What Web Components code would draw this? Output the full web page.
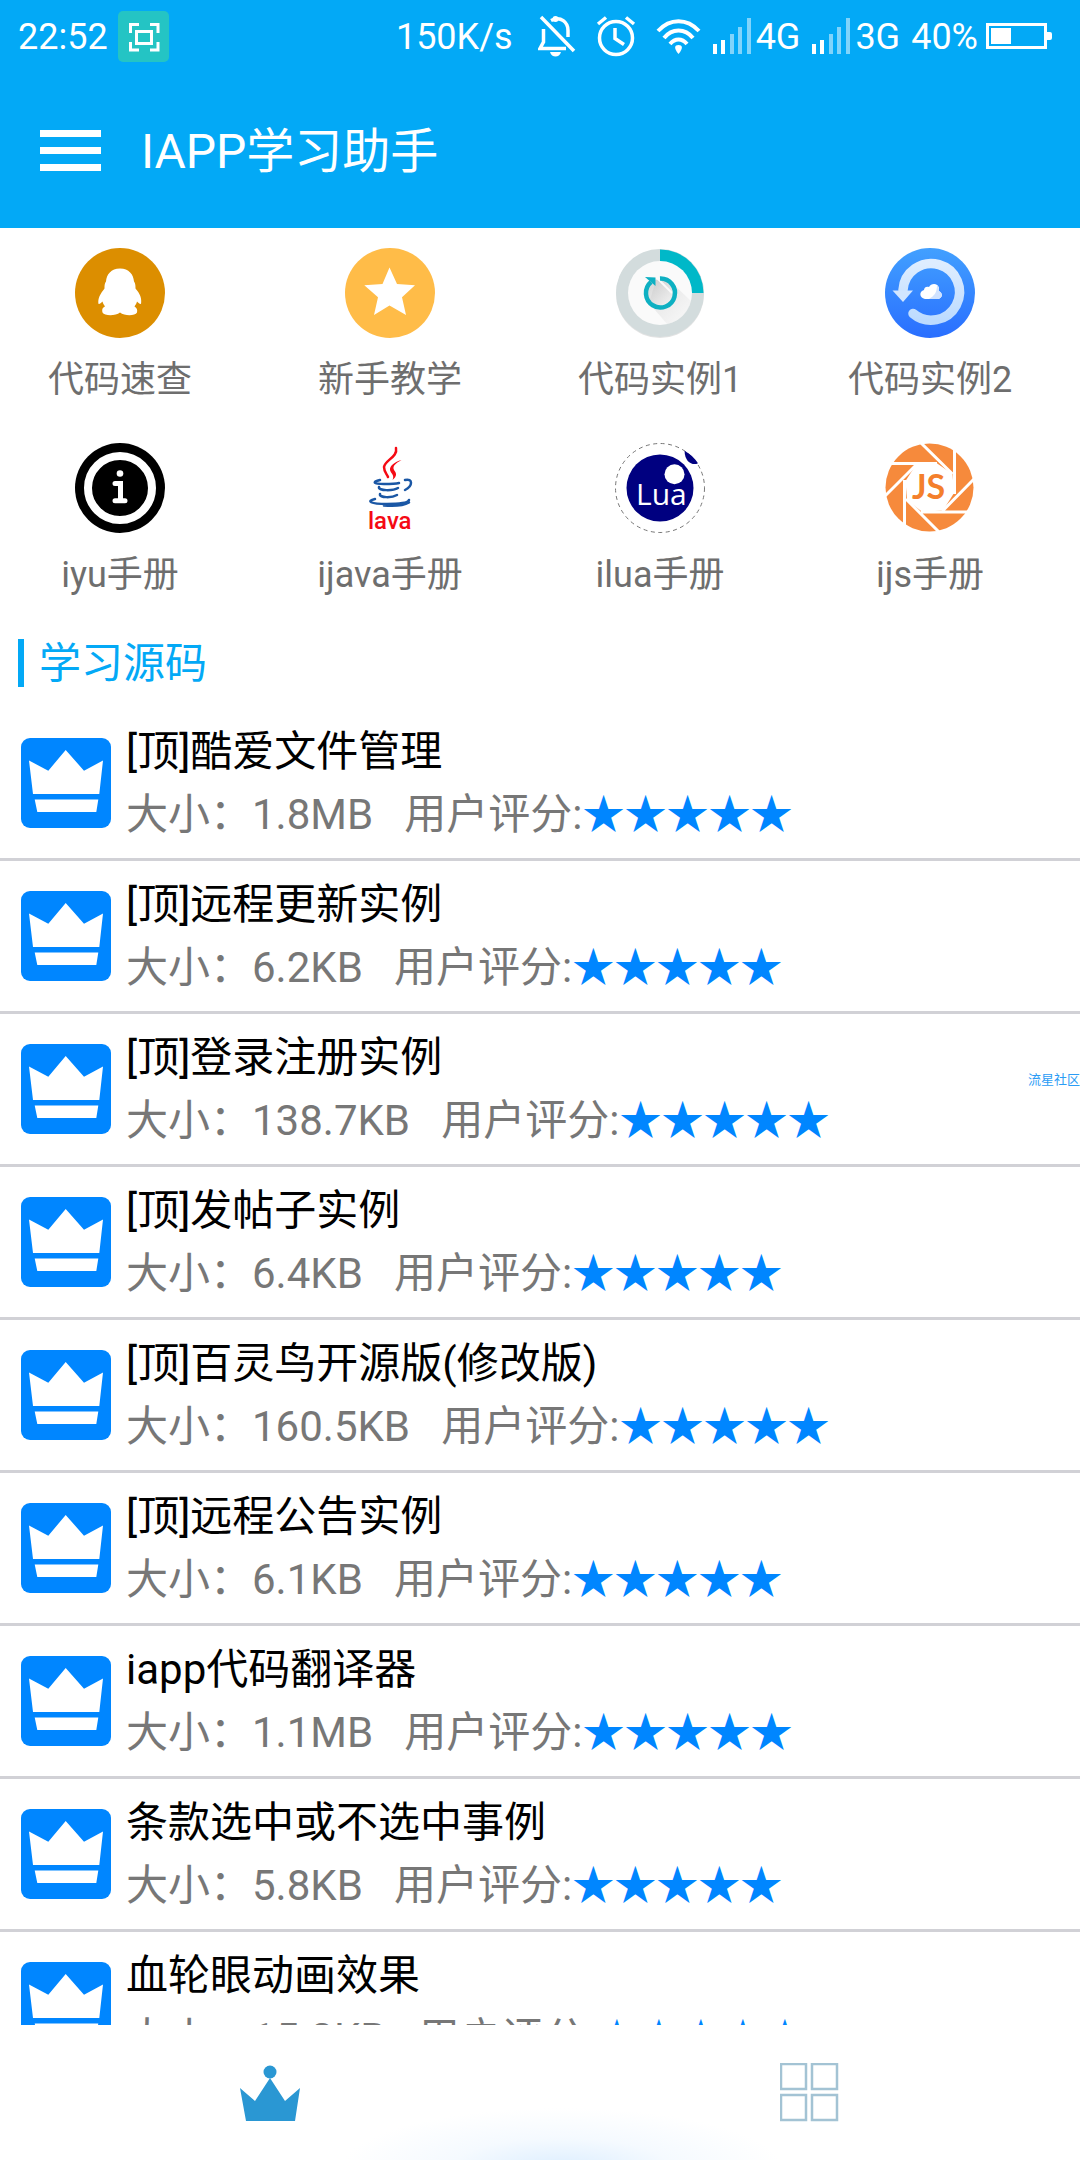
<!DOCTYPE html>
<html lang="zh-CN">
<head>
<meta charset="utf-8">
<meta name="viewport" content="width=device-width, initial-scale=1">
<title>IAPP学习助手</title>
<style>
    :root {
        --primary-color: #03a9f6;
        --accent-color: #0086ff;
        --label-color: #6e6e6e;
        --line-color: #d1d1d6;
    }
    body {
        margin: 0;
        background: #fff;
        font-family: Roboto, "Noto Sans CJK SC", sans-serif;
    }
</style>
</head>
<body>
<study-app></study-app>

<script>
const menuIcons = {
    penguin: `
        <circle cx="45" cy="45" r="45" fill="#dc8e00"/>
        <path fill="#fff" d="M45 20.5c-9 0-13.500 6-14 13-1.500 2-1.500 4-1.500 7-4 5-7 10-6 15.500 2-.2 3-1.500 4-2.500 .5 2 1.500 3.500 2.500 5-3 1.500-3 3-2.500 6 2 3.500 13 3.500 17.500 0 4.500 3.500 15 3.500 17 0 .5-3 0-4.500-2.500-6 1-1.500 2-3 2.500-5 1 1 2 2.300 4 2.500 1-5.500-1-10.500-5.500-15.500 0-3 0-5-1.500-7-.5-7-5-13-14-13z"/>`,
    star: `
        <circle cx="45" cy="45" r="45" fill="#ffbc48"/>
        <path fill="#fff" d="M44.500 19.500 52 36l18 1.300-13 12L61 67l-16.500-9.500L29 67l4-17.700-13.700-12L37.500 36z"/>`,
    timer: `
        <defs><linearGradient id="shade" x1="0" y1="0" x2="1" y2="1"><stop offset="0" stop-color="#b8b8b8"/><stop offset="1" stop-color="#fafafa"/></linearGradient></defs>
        <circle cx="45" cy="46" r="44" fill="#e3e3e3"/>
        <circle cx="45" cy="45" r="44" fill="#d3dcdd"/>
        <path fill="#00b8c8" d="M45 1.500A43.500 43.500 0 0 1 88.500 45H45z"/>
        <circle cx="45" cy="45" r="32" fill="#fafafa"/>
        <path fill="url(#shade)" opacity=".4" d="M41 32 34 55l18 21c12-2 22-12 24-23L56 34z"/>
        <circle cx="45" cy="45" r="14" fill="url(#shade)" opacity=".6"/>
        <path fill="none" stroke="#fafafa" stroke-width="2" d="m42 30 15 15"/>
        <path fill="none" stroke="#0eb0c2" stroke-width="4.500" d="M45 30.500A14.500 14.500 0 1 1 36 34"/>
        <path fill="#0eb0c2" d="m30 29 10.500.5V38z"/>`,
    backup: `
        <defs>
            <linearGradient id="sky" x1="0" y1="0" x2="0" y2="1"><stop offset="0" stop-color="#42a0ff"/><stop offset="1" stop-color="#296eff"/></linearGradient>
            <linearGradient id="ring" x1="0" y1="0" x2="0" y2="1"><stop offset="0" stop-color="#deedff"/><stop offset="1" stop-color="#bcdbff"/></linearGradient>
        </defs>
        <circle cx="45" cy="45" r="45" fill="url(#sky)"/>
        <path fill="none" stroke="url(#ring)" stroke-width="9.500" stroke-linecap="round" d="M18 42A28.300 28.300 0 1 1 28 65.500"/>
        <path fill="#d2e6ff" d="M7.500 42.500H28L18 54z"/>
        <path fill="#fff" d="M40 51c-6-1-6-8-1-9 0-3 3-4 5-3 2-4 9-4 10 1 0 2 0 3 0 3 4 2 4 7-1 8z"/>
        <path fill="#cfe2ff" d="M44 51c5-3 8-6 8-14 2 2 2 4 2 6 4 2 4 7-1 8z"/>`,
    info: `
        <circle cx="45" cy="45" r="45"/>
        <circle cx="45" cy="45" r="32" fill="none" stroke="#fff" stroke-width="8"/>
        <circle cx="45" cy="30.500" r="3.300" fill="#fff"/>
        <path fill="none" stroke="#fff" stroke-width="5" stroke-linecap="round" d="M40 40.500h5.500V57M40 57.700h10"/>`,
    coffee: `
        <path fill="none" stroke="#f50a14" stroke-width="2.500" stroke-linecap="round" d="M51 5c2 9-11 12-12 19 0 5 3 7 4 10"/>
        <path fill="#f50a14" d="M56.500 17c-7 2-12 6-11.500 10 .5 3 5 5 2.500 10 5-4 4-7 1.500-10-2-4 2-7 7.500-10z"/>
        <g fill="none" stroke="#1a57a5" stroke-width="2.500" stroke-linecap="round">
            <path d="M35 37c-8 2-7 4 4 4 7 0 11 0 15-1M60 37c8-2 8 6 0 10M34 44c-1 4 14 4 19 1M35 51c-1 4 12 4 17 1M30 56c-9 2-5 5 12 5 12 0 21-1 22-4M39 62.500c10 .8 19 .5 25-3"/>
        </g>
        <text x="23" y="86" font-family="Roboto, sans-serif" font-size="24" font-weight="500" fill="#f50a14">lava</text>`,
    lua: `
        <circle cx="45" cy="45" r="44.500" fill="none" stroke="#777" stroke-dasharray="4 3.500"/>
        <circle cx="45" cy="45" r="33.500" fill="#000080"/>
        <circle cx="59.500" cy="31.300" r="10" fill="#fff"/>
        <path fill="#000080" d="M69.600 7.700c5 3 10 7 13.400 12.500-5 2.800-13.400-.7-13.400-12.500z"/>
        <text x="21" y="62" font-family="'Open Sans', sans-serif" font-size="30" fill="#fff">Lua</text>`,
    js: `
        <circle cx="44.500" cy="44.500" r="44" fill="#f68a3c"/>
        <path fill="#fff" d="M31.500 21 51.500 20l16 11L69 50 58 67.500l-21 1.200L22 57l-1.500-19z"/>
        <path fill="none" stroke="#fff" stroke-width="3" d="m36 0 31.500 31M69.500 6v45M89 36 57.500 68M84 69H36M54 89 21 56M19.500 82V37M0 53l32-32M6 20.500h46"/>
        <text x="27" y="56" font-family="Lato, sans-serif" font-size="34" font-weight="700" fill="#f47f2c">JS</text>`
};

class StatusBar extends HTMLElement {
    constructor() {
        super();
        this.attachShadow({ mode: 'open' });
    }

    connectedCallback() {
        this.shadowRoot.innerHTML = `
            <style>
                :host {
                    display: flex;
                    justify-content: space-between;
                    align-items: center;
                    height: 72px;
                    padding: 0 28px 0 18px;
                    font-size: 36px;
                    line-height: 40px;
                    color: #fff;
                }
                div { display: flex; align-items: center; }
                svg { display: block; }
                span { padding-top: 2px; }
                .left { gap: 10px; }
                .right { gap: 11px; }
                .icons { gap: 20px; margin-left: 14px; }
                .net { gap: 4px; }
                .power { gap: 8px; }
            </style>
            <div class="left">
                <span>22:52</span>
                <svg width="51" height="51" viewBox="0 0 51 51">
                    <rect width="51" height="51" rx="5" fill="#24c4c4"/>
                    <path fill="none" stroke="#fff" stroke-width="3" d="M12.500 22v-8.500H21M32 13.500h8V22M40 31v8h-8M21 39h-8.500v-8"/>
                    <rect x="18.500" y="20.500" width="15" height="12" fill="none" stroke="#fff" stroke-width="3"/>
                </svg>
            </div>
            <div class="right">
                <span>150K/s</span>
                <div class="icons">
                    <svg width="38" height="42" viewBox="0 0 38 42" fill="none" stroke="#fff" stroke-width="3.500">
                        <path d="M5.500 14v13L2 33.500h26M13 5.500c10-5 17 2 17 10V22M3 2l33 34"/>
                        <circle cx="17.500" cy="4" r="3" fill="#fff" stroke="none"/>
                        <path fill="#fff" stroke="none" d="M12 37h11c-1.500 6-9.500 6-11 0z"/>
                    </svg>
                    <svg width="40" height="42" viewBox="0 0 40 42" fill="none" stroke="#fff" stroke-width="3.500">
                        <circle cx="20" cy="23" r="16.500"/>
                        <path d="M19 13v10.500l9 6M2 9l8-6.500M38 9l-8-6.500"/>
                    </svg>
                    <svg width="45" height="36" viewBox="0 0 45 36" fill="none" stroke="#fff" stroke-width="4">
                        <path d="M2 13c12-13 29-13 41 0M8 20c8-10 21-10 29 0M14 26c5-6 12-6 17 0"/>
                        <path fill="#fff" stroke="none" d="M22.500 27c4 0 5 3 0 9-5-6-4-9 0-9z"/>
                    </svg>
                </div>
                <div class="net">${this.signal()}<span>4G</span></div>
                <div class="net">${this.signal()}<span>3G</span></div>
                <div class="power">
                    <span>40%</span>
                    <svg width="66" height="26" viewBox="0 0 66 26">
                        <rect x="1.500" y="1.500" width="58" height="23" fill="none" stroke="#fff" stroke-width="3"/>
                        <path fill="#fff" d="M5 5h20v16H5zM61 9h3q2 0 2 2v4q0 2-2 2h-3z"/>
                    </svg>
                </div>
            </div>
        `;
    }

    signal() {
        return `
            <svg width="40" height="36" viewBox="0 0 40 36" fill="#fff">
                <path d="M1 26h4v10H1zM9 22h4v14H9z"/>
                <path opacity=".5" d="M18 16h4v20h-4zM26 9h4v27h-4zM35 0h4v36h-4z"/>
            </svg>`;
    }
}

class TitleBar extends HTMLElement {
    constructor() {
        super();
        this.attachShadow({ mode: 'open' });
        this.shadowRoot.innerHTML = `
            <style>
                :host {
                    display: flex;
                    align-items: center;
                    gap: 40px;
                    height: 156px;
                    padding: 0 40px;
                    color: #fff;
                }
                button {
                    display: block;
                    padding: 0;
                    border: 0;
                    background: none;
                    cursor: pointer;
                }
                svg { display: block; }
                h1 { margin: 0; padding-top: 4px; font-size: 48px; line-height: 64px; font-weight: 400; }
            </style>
            <button type="button" aria-label="菜单">
                <svg width="61" height="41" viewBox="0 0 61 41" fill="#fff">
                    <path d="M0 0h61v7H0zM0 17h61v7H0zM0 34h61v7H0z"/>
                </svg>
            </button>
            <h1><slot></slot></h1>
        `;
    }
}

class MenuEntry extends HTMLElement {
    constructor() {
        super();
        this.attachShadow({ mode: 'open' });
    }

    connectedCallback() {
        this.shadowRoot.innerHTML = `
            <style>
                :host { display: block; }
                a {
                    display: flex;
                    flex-direction: column;
                    align-items: center;
                    gap: 18px;
                    height: 195px;
                    padding-right: 30px;
                    font-size: 36px;
                    line-height: 48px;
                    color: var(--label-color);
                    text-decoration: none;
                }
                svg { display: block; }
            </style>
            <a href="#">
                <svg width="90" height="90" viewBox="0 0 90 90">${menuIcons[this.getAttribute('icon')]}</svg>
                <span><slot></slot></span>
            </a>
        `;
    }
}

class SectionTitle extends HTMLElement {
    constructor() {
        super();
        this.attachShadow({ mode: 'open' });
        this.shadowRoot.innerHTML = `
            <style>
                :host { display: block; padding: 0 18px 21px; }
                h2 {
                    margin: 0;
                    padding: 2px 0 0 15px;
                    border-left: 6px solid var(--primary-color);
                    font-size: 42px;
                    line-height: 46px;
                    font-weight: 400;
                    color: var(--primary-color);
                }
            </style>
            <h2><slot></slot></h2>
        `;
    }
}

class SourceItem extends HTMLElement {
    constructor() {
        super();
        this.attachShadow({ mode: 'open' });
    }

    connectedCallback() {
        this.shadowRoot.innerHTML = `
            <style>
                :host { display: block; border-bottom: 3px solid var(--line-color); }
                a {
                    display: flex;
                    align-items: center;
                    gap: 15px;
                    height: 150px;
                    padding: 0 21px;
                    color: #000;
                    text-decoration: none;
                }
                svg { display: block; flex: none; }
                .text { font-size: 42px; line-height: 63px; white-space: pre; }
                .info { color: #777; }
                .stars { color: var(--accent-color); }
            </style>
            <a href="#">
                <svg width="90" height="90" viewBox="0 0 90 90">
                    <rect width="90" height="90" rx="9" fill="#0086ff"/>
                    <path fill="#fff" d="m8 22.500 19.300 10.200L44.700 12 63 32.700l19-10.200L78.300 56H12zM13.700 61.500h63.600l-2 12.500h-59z"/>
                </svg>
                <div class="text"><div><slot></slot></div><div class="info">大小：${this.getAttribute('size')}   用户评分:<span class="stars">★★★★★</span></div></div>
            </a>
        `;
    }
}

class TabBar extends HTMLElement {
    constructor() {
        super();
        this.attachShadow({ mode: 'open' });
        this.shadowRoot.innerHTML = `
            <style>
                :host {
                    display: flex;
                    height: 135px;
                    background: radial-gradient(ellipse 220px 60px at 52% 106%, #dceeff, #f5faff 50%, #fff) #fff;
                }
                button {
                    display: flex;
                    flex: 1;
                    align-items: center;
                    justify-content: center;
                    padding: 0;
                    border: 0;
                    background: none;
                    cursor: pointer;
                }
            </style>
            <button type="button" aria-label="首页">
                <svg width="60" height="60" viewBox="0 0 60 60" fill="#2a97d3">
                    <circle cx="30" cy="9" r="6.500"/>
                    <path d="m0 25 15 13 15-23 15 23 15-13-5 33H6z"/>
                </svg>
            </button>
            <button type="button" aria-label="更多">
                <svg width="60" height="60" viewBox="0 0 60 60" fill="none" stroke="#a3c3d4" stroke-width="2.500">
                    <path d="M1 1h25v25H1zM32 1h25v25H32zM1 32h25v25H1zM32 32h25v25H32z"/>
                </svg>
            </button>
        `;
    }
}

class StudyApp extends HTMLElement {
    constructor() {
        super();
        this.attachShadow({ mode: 'open' });
        this.entries = [
            { name: '代码速查', icon: 'penguin' },
            { name: '新手教学', icon: 'star' },
            { name: '代码实例1', icon: 'timer' },
            { name: '代码实例2', icon: 'backup' },
            { name: 'iyu手册', icon: 'info' },
            { name: 'ijava手册', icon: 'coffee' },
            { name: 'ilua手册', icon: 'lua' },
            { name: 'ijs手册', icon: 'js' }
        ];
        this.sources = [
            { name: '[顶]酷爱文件管理', size: '1.8MB' },
            { name: '[顶]远程更新实例', size: '6.2KB' },
            { name: '[顶]登录注册实例', size: '138.7KB' },
            { name: '[顶]发帖子实例', size: '6.4KB' },
            { name: '[顶]百灵鸟开源版(修改版)', size: '160.5KB' },
            { name: '[顶]远程公告实例', size: '6.1KB' },
            { name: 'iapp代码翻译器', size: '1.1MB' },
            { name: '条款选中或不选中事例', size: '5.8KB' },
            { name: '血轮眼动画效果', size: '15.2KB' }
        ];
    }

    connectedCallback() {
        this.render();
    }

    render() {
        this.shadowRoot.innerHTML = `
            <style>
                :host {
                    position: relative;
                    display: flex;
                    flex-direction: column;
                    height: 100vh;
                    overflow: hidden;
                }
                header { background: var(--primary-color); }
                header, nav, section-title, tab-bar { flex: none; }
                nav {
                    display: grid;
                    grid-template-columns: repeat(4, 1fr);
                    padding: 20px 0 1px;
                }
                main {
                    flex: 1;
                    min-height: 0;
                    overflow-y: auto;
                    scrollbar-width: none;
                }
                .mark {
                    position: absolute;
                    top: 50%;
                    right: 0;
                    margin-top: -9px;
                    font-size: 13px;
                    line-height: 18px;
                    color: #2b9cf5;
                }
            </style>
            <header>
                <status-bar></status-bar>
                <title-bar>IAPP学习助手</title-bar>
            </header>
            <nav>${this.entries.map(e => `<menu-entry icon="${e.icon}">${e.name}</menu-entry>`).join('')}</nav>
            <section-title>学习源码</section-title>
            <main>${this.sources.map(s => `<source-item size="${s.size}">${s.name}</source-item>`).join('')}</main>
            <tab-bar></tab-bar>
            <span class="mark">流星社区</span>
        `;
    }
}

customElements.define('status-bar', StatusBar);
customElements.define('title-bar', TitleBar);
customElements.define('menu-entry', MenuEntry);
customElements.define('section-title', SectionTitle);
customElements.define('source-item', SourceItem);
customElements.define('tab-bar', TabBar);
customElements.define('study-app', StudyApp);
</script>
</body>
</html>
